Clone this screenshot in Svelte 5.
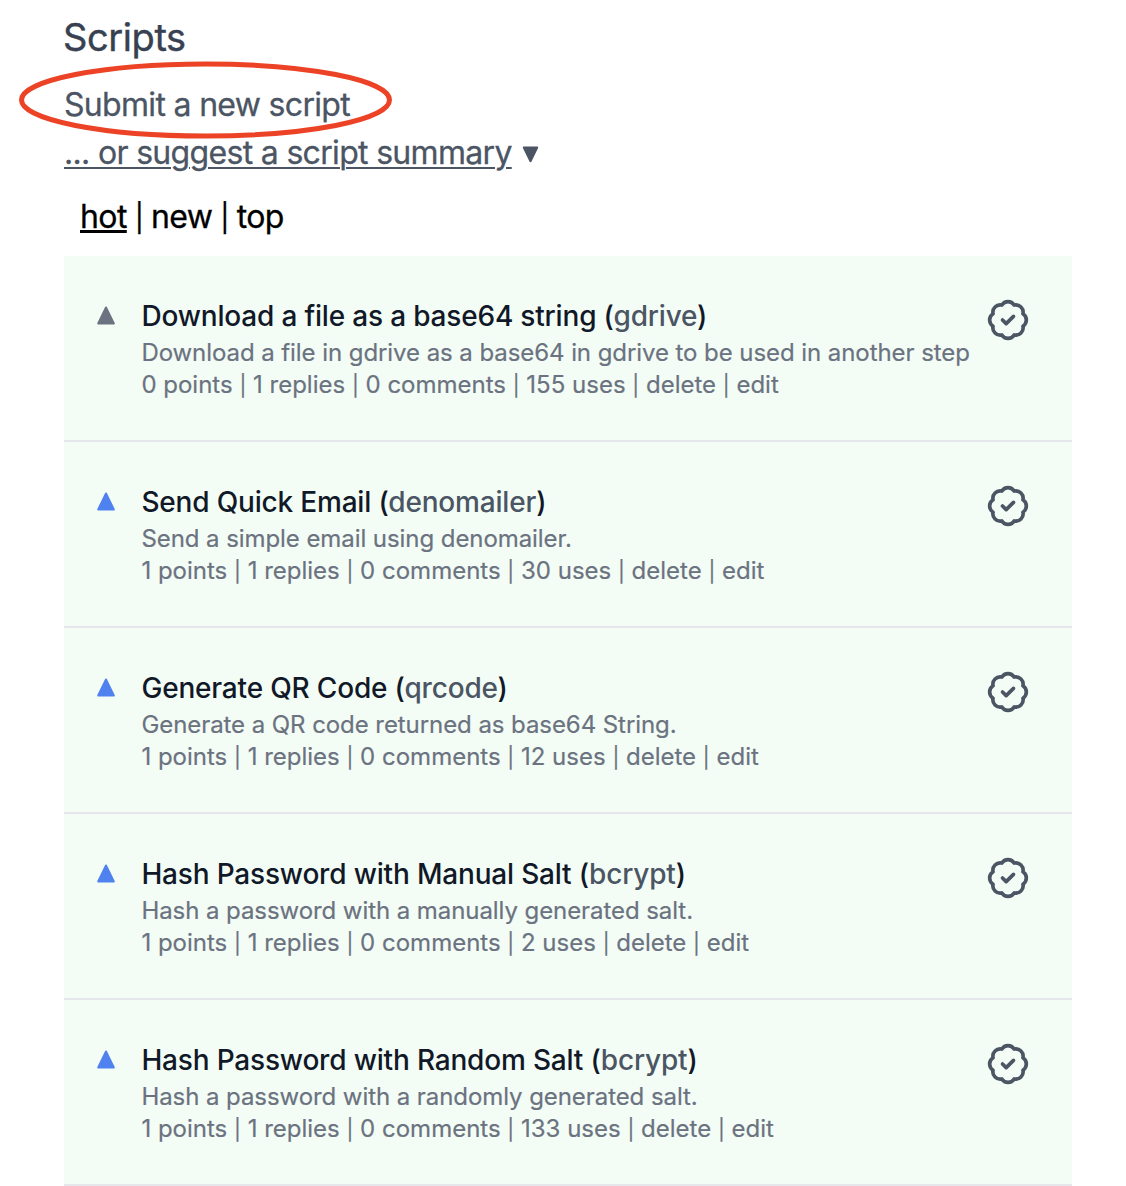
<script>
  const scripts = [
    { title: 'Download a file as a base64 string', app: 'gdrive', summary: 'Download a file in gdrive as a base64 in gdrive to be used in another step', points: 0, uses: 155 },
    { title: 'Send Quick Email', app: 'denomailer', summary: 'Send a simple email using denomailer.', points: 1, uses: 30 },
    { title: 'Generate QR Code', app: 'qrcode', summary: 'Generate a QR code returned as base64 String.', points: 1, uses: 12 },
    { title: 'Hash Password with Manual Salt', app: 'bcrypt', summary: 'Hash a password with a manually generated salt.', points: 1, uses: 2 },
    { title: 'Hash Password with Random Salt', app: 'bcrypt', summary: 'Hash a password with a randomly generated salt.', points: 1, uses: 133 }
  ];
</script>

{#snippet bar()}{' '}<span class="bar">|</span>{' '}{/snippet}

<main>
  <h1>Scripts</h1>
  <div class="submit">
    <a class="new">Submit a new script</a>
    <svg class="ring" viewBox="0 0 376 80"><ellipse cx="187.5" cy="40" rx="184" ry="36" /></svg>
  </div>
  <div class="suggest">
    <a class="summary-link">... or suggest a script summary</a>
    <svg class="caret" viewBox="0 0 17 17"><path d="M1.8 1.5h13.4L8.5 15.2z" /></svg>
  </div>
  <nav><a class="active">hot</a>{@render bar()}<a>new</a>{@render bar()}<a>top</a></nav>
  <ul>
    {#each scripts as s}
      <li>
        <svg class="vote" class:voted={s.points > 0} viewBox="0 0 18 19"><path d="M9 1.5L16.8 17.5H1.2z" /></svg>
        <div class="body">
          <h2>{s.title} (<span>{s.app}</span>)</h2>
          <p class="desc">{s.summary}</p>
          <p class="meta">{s.points} points{@render bar()}1 replies{@render bar()}0 comments{@render bar()}{s.uses} uses{@render bar()}delete{@render bar()}edit</p>
        </div>
        <svg class="badge" viewBox="0 0 24 24">
          <path d="M3.85 8.62a4 4 0 0 1 4.78-4.77 4 4 0 0 1 6.74 0 4 4 0 0 1 4.78 4.78 4 4 0 0 1 0 6.74 4 4 0 0 1-4.77 4.78 4 4 0 0 1-6.75 0 4 4 0 0 1-4.78-4.77 4 4 0 0 1 0-6.76Z" />
          <path d="m9 12 2 2 4-4" />
        </svg>
      </li>
    {/each}
  </ul>
</main>

<style>
  :global(body) { background: #fff; overflow: hidden; }
  main {
    box-sizing: border-box;
    height: 1186px;
    padding: 7px 54px 0 64px;
    overflow: hidden;
    font-family: Inter, "Liberation Sans", sans-serif;
    color: #000;
    white-space: nowrap;
  }
  h1, h2, p, ul { margin: 0; padding: 0; font-weight: 400; }
  h1 { font-size: 38px; line-height: 60px; letter-spacing: -0.4px; margin-left: -1px; color: #374151; -webkit-text-stroke: 0.4px #374151; }
  .submit { position: relative; height: 65px; display: flex; align-items: center; padding-top: 10px; box-sizing: border-box; }
  .new, .summary-link { font-size: 32px; line-height: 48px; letter-spacing: -0.68px; color: #4b5563; -webkit-text-stroke: 0.3px #4b5563; }
  .ring { position: absolute; left: -46px; top: -7px; width: 376px; height: 80px; fill: none; stroke: #ec4326; stroke-width: 5; }
  .suggest { display: flex; align-items: center; height: 48px; margin-top: -3px; gap: 10px; }
  .summary-link { text-decoration: underline; text-decoration-thickness: 2px; text-underline-offset: 3px; }
  .caret { width: 17px; height: 17px; margin-top: 3px; fill: #4b5563; stroke: #4b5563; stroke-width: 2; stroke-linejoin: round; }
  nav { height: 79px; padding: 16px 0 0 16px; box-sizing: border-box; font-size: 32px; line-height: 48px; letter-spacing: -0.6px; -webkit-text-stroke: 0.3px #000; }
  .bar { display: inline-block; font-size: 0.86em; line-height: 1; }
  nav .bar { margin: 0 -0.02em; }
  .active { text-decoration: underline; text-decoration-thickness: 3px; text-underline-offset: 2px; }
  ul { list-style: none; }
  li { box-sizing: border-box; height: 186px; display: flex; align-items: flex-start; background: #f3fdf6; border-bottom: 2px solid #e5e7eb; padding: 40px 42px 0 33px; width: 1008px; }
  .vote { width: 18px; height: 19px; margin: 10px 26px 0 0; flex: none; fill: #6b7280; stroke: #6b7280; stroke-width: 2; stroke-linejoin: round; }
  .voted { fill: #4f82ee; stroke: #4f82ee; }
  .body { flex: 1; min-width: 0; margin-left: 0.4px; }
  h2 { font-size: 28px; line-height: 41px; letter-spacing: -0.18px; font-weight: 500; color: #111827; }
  h2 span { color: #4b5563; }
  p { font-size: 24px; line-height: 32px; color: #6b7280; -webkit-text-stroke: 0.2px #6b7280; }
  .desc { letter-spacing: -0.07px; }
  .badge { width: 44px; height: 44px; margin-top: 2px; flex: none; fill: none; stroke: #4b5563; stroke-width: 2; stroke-linecap: round; stroke-linejoin: round; }
</style>
